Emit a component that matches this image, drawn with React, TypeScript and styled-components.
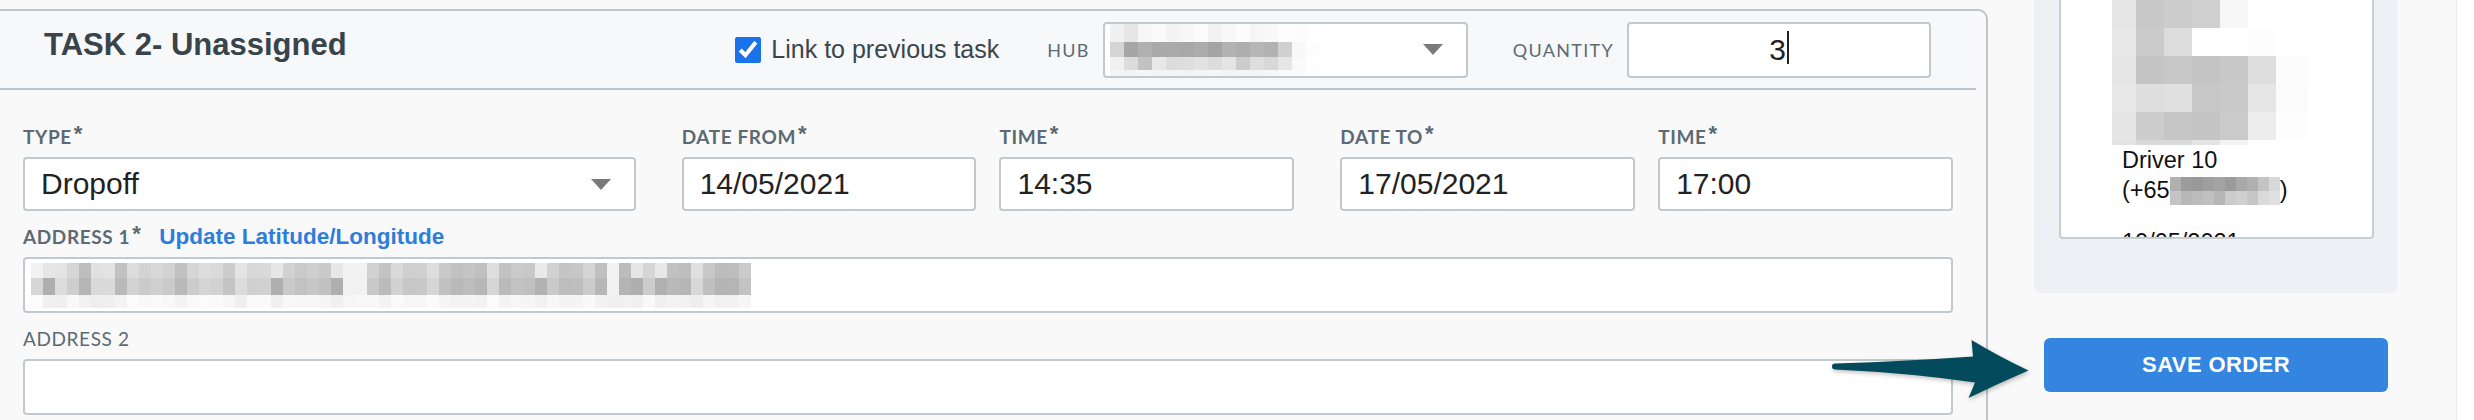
import React from "react";
import styled, { createGlobalStyle } from "styled-components";

const GlobalStyle = createGlobalStyle`
  html, body {
    margin: 0;
    padding: 0;
    background: #ffffff;
  }
  body {
    font-family: "Liberation Sans", Arial, sans-serif;
  }
  * {
    box-sizing: border-box;
  }
`;

const Page = styled.div`
  display: flex;
  width: 2474px;
  height: 420px;
  overflow: hidden;
  background: #ffffff;
`;

const Main = styled.main`
  position: relative;
  flex: 0 0 2457px;
  display: flex;
  align-items: flex-start;
  gap: 46px;
  background: #f9f9f9;
  border-right: 1px solid #ececec;
`;

const TaskPanel = styled.section`
  flex: 0 0 1988px;
  height: 430px;
  margin-top: 9px;
  border-top: 2px solid #bcc5ca;
  border-right: 2px solid #bcc5ca;
  border-top-right-radius: 10px;
  background: #f9f9f9;
`;

const PanelHeader = styled.header`
  display: flex;
  align-items: center;
  height: 79px;
  margin-right: 10px;
  padding: 0 45px 0 44px;
  background: #f6f8f9;
  border-bottom: 2px solid #bcc5ca;
`;

const Title = styled.h2`
  flex: 1;
  margin: 0 0 10px;
  font-size: 31px;
  font-weight: 700;
  color: #38434b;
`;

const CheckLabel = styled.label`
  display: flex;
  align-items: center;
  gap: 10px;
  margin-right: 48px;
  font-size: 25px;
  color: #3b454c;
`;

const CheckBox = styled.input`
  width: 26px;
  height: 26px;
  margin: 0;
  accent-color: #1a73e8;
`;

const HeaderTag = styled.span`
  margin-right: 13px;
  font-family: Lato, "Liberation Sans", sans-serif;
  font-size: 18px;
  letter-spacing: 1.3px;
  text-transform: uppercase;
  color: #5d6b74;
`;

const BoxBase = styled.div<{ $w?: number; $h: number }>`
  position: relative;
  display: flex;
  align-items: center;
  width: ${(p) => (p.$w ? `${p.$w}px` : "100%")};
  height: ${(p) => p.$h}px;
  padding: 0 16px;
  background: #ffffff;
  border: 2px solid #c0c9cd;
  border-radius: 4px;
  font-size: 30px;
  color: #222222;
`;

const SelectBox = styled(BoxBase)`
  justify-content: space-between;
  padding-right: 23px;
`;

const SelectCaret = styled.span`
  width: 0;
  height: 0;
  border-left: 10px solid transparent;
  border-right: 10px solid transparent;
  border-top: 11px solid #7a7a7a;
`;

const HubSelect = styled(SelectBox)`
  margin-right: 45px;
  padding-left: 5px;
`;

const QuantityBox = styled(BoxBase)`
  justify-content: center;
`;

const RedactedBox = styled(BoxBase)`
  padding-left: 6px;
`;

const TypingCaret = styled.span`
  width: 2px;
  height: 33px;
  margin-left: 1px;
  margin-top: -5px;
  background: #222222;
`;

const TextInput = styled.input<{ $h: number }>`
  display: block;
  width: 100%;
  height: ${(p) => p.$h}px;
  padding: 0 16px;
  background: #ffffff;
  border: 2px solid #c0c9cd;
  border-radius: 4px;
  font-family: "Liberation Sans", Arial, sans-serif;
  font-size: 30px;
  color: #222222;
  outline: none;
`;

const PanelBody = styled.div`
  display: flex;
  flex-direction: column;
  gap: 15px;
  padding: 36px 33px 0 23px;
`;

const TopRow = styled.div`
  display: grid;
  grid-template-columns: repeat(3, 1fr);
  gap: 46px;
`;

const Pair = styled.div`
  display: grid;
  grid-template-columns: 1fr 1fr;
  gap: 23px;
`;

const Field = styled.div`
  display: flex;
  flex-direction: column;
  min-width: 0;
`;

const FieldLabel = styled.div<{ $bold?: boolean }>`
  display: flex;
  align-items: baseline;
  height: 22px;
  margin-bottom: 9px;
  line-height: 22px;
  font-family: Lato, "Liberation Sans", sans-serif;
  font-size: 19px;
  font-weight: ${(p) => (p.$bold ? 700 : 400)};
  letter-spacing: 0.6px;
  text-transform: uppercase;
  color: #5b6a73;
  white-space: nowrap;
`;

const Req = styled.sup`
  position: relative;
  top: -3px;
  margin-left: 2px;
  font-family: "Liberation Sans", Arial, sans-serif;
  font-size: 22px;
  font-weight: 700;
  line-height: 0;
`;

const UpdateLink = styled.a`
  margin-left: 18px;
  font-family: "Liberation Sans", Arial, sans-serif;
  font-size: 22.5px;
  font-weight: 700;
  letter-spacing: 0;
  text-transform: none;
  color: #2d7ddb;
  text-decoration: none;
`;

const Sidebar = styled.aside`
  flex: 0 0 363px;
  display: flex;
  flex-direction: column;
`;

const DriverPanel = styled.div`
  padding: 0 23px 54px 25px;
  background: #eef0f5;
  border-radius: 0 0 6px 6px;
`;

const DriverCard = styled.div`
  height: 239px;
  overflow: hidden;
  padding-left: 51px;
  background: #ffffff;
  border: 2px solid #c7ced2;
  border-top: none;
  border-radius: 0 0 4px 4px;
`;

const DriverText = styled.div`
  margin-left: 10px;
  font-size: 23.5px;
  line-height: 30px;
  color: #111111;
`;

const DateLine = styled.div`
  margin-top: 22px;
`;

const SaveButton = styled.button`
  height: 54px;
  margin: 45px 9px 0 10px;
  background: #3385e0;
  border: none;
  border-radius: 6px;
  font-family: "Liberation Sans", Arial, sans-serif;
  font-size: 22px;
  font-weight: 700;
  letter-spacing: 0.4px;
  color: #ffffff;
`;

const Gutter = styled.div`
  flex: 1;
  background: #ffffff;
`;

const Pointer = styled.svg`
  position: absolute;
  left: 1830px;
  top: 335px;
  filter: drop-shadow(1px 2px 2px rgba(0, 0, 0, 0.25));
`;

const MosaicSvg = styled.svg`
  display: block;
  flex-shrink: 0;
`;

const InlineMosaic = styled(MosaicSvg)`
  display: inline-block;
  vertical-align: -7px;
`;

const grey = (v: number) => {
  const h = Math.max(0, Math.min(255, Math.round(v))).toString(16).padStart(2, "0");
  return `#${h}${h}${h}`;
};

// deterministic noise for the redacted areas
const noise = (i: number, seed: number) => ((i * 53 + seed * 29 + ((i * i * 7) % 13) * 11) % 41) / 41;

const makeRow = (count: number, base: number, spread: number, seed: number, light: number[] = []) =>
  Array.from({ length: count }, (_, i) => (light.includes(i) ? 0xf2 : base + noise(i, seed) * spread));

type MosaicProps = {
  cols: number[];
  rows: number[];
  values: number[][];
  as?: typeof MosaicSvg;
};

const Mosaic: React.FC<MosaicProps> = ({ cols, rows, values, as }) => {
  const Svg = as || MosaicSvg;
  const w = cols.reduce((a, b) => a + b, 0);
  const h = rows.reduce((a, b) => a + b, 0);
  let y = 0;
  return (
    <Svg width={w} height={h} viewBox={`0 0 ${w} ${h}`} shapeRendering="crispEdges">
      {rows.map((rh, r) => {
        let x = 0;
        const top = y;
        y += rh;
        return cols.map((cw, c) => {
          const left = x;
          x += cw;
          return <rect key={`${r}-${c}`} x={left} y={top} width={cw} height={rh} fill={grey(values[r][c] ?? 255)} />;
        });
      })}
    </Svg>
  );
};

const photoValues = [
  [0xe6, 0xc8, 0xcd, 0xcf, 0xf7, 0xff, 0xff],
  [0xe8, 0xca, 0xdc, 0xff, 0xff, 0xfd, 0xff],
  [0xe6, 0xc4, 0xc7, 0xc4, 0xc8, 0xde, 0xfc],
  [0xe8, 0xde, 0xe0, 0xc7, 0xc9, 0xe6, 0xfb],
  [0xe5, 0xcd, 0xc6, 0xc5, 0xcb, 0xed, 0xfd],
  [0xe3, 0xd9, 0xda, 0xe4, 0xf3, 0xff, 0xff],
];

const addressCols = Array.from({ length: 60 }, () => 12);
const addressValues = [
  makeRow(60, 0xbc, 0x30, 1, [0, 26, 27, 48]),
  makeRow(60, 0xae, 0x30, 4, [26, 27, 48]),
  makeRow(60, 0xee, 0x0e, 7),
];

const hubCols = Array.from({ length: 15 }, () => 14);
const hubValues = [
  [0xf0, 0xe6, 0xf6, 0xfa, 0xf4, 0xf7, 0xfb, 0xf2, 0xf8, 0xfc, 0xf6, 0xf9, 0xfd, 0xfc, 0xfe],
  [0xd4, 0xa6, 0xb0, 0xa9, 0xaa, 0xa8, 0xac, 0xa4, 0xb3, 0xae, 0xb6, 0xb2, 0xd0, 0xf8, 0xfd],
  [0xf0, 0xdc, 0xc2, 0xe8, 0xdc, 0xde, 0xe2, 0xdc, 0xe4, 0xcc, 0xde, 0xd8, 0xe6, 0xfa, 0xfe],
  [0xf4, 0xf2, 0xf6, 0xf3, 0xf5, 0xf2, 0xf4, 0xf6, 0xf3, 0xf5, 0xf4, 0xf6, 0xfa, 0xfb, 0xfd],
];

const phoneCols = Array.from({ length: 10 }, () => 11);
const phoneValues = [
  [0xb0, 0x9c, 0x98, 0x9e, 0xa4, 0x9a, 0xa8, 0xb0, 0xc4, 0xd8],
  [0xc4, 0xb8, 0xbc, 0xc0, 0xb6, 0xcc, 0xd0, 0xc6, 0xda, 0xe0],
];

const Required = () => <Req>*</Req>;

const App: React.FC = () => {
  return (
    <>
      <GlobalStyle />
      <Page>
        <Main>
          <TaskPanel>
            <PanelHeader>
              <Title>TASK 2- Unassigned</Title>
              <CheckLabel>
                <CheckBox type="checkbox" defaultChecked />
                Link to previous task
              </CheckLabel>
              <HeaderTag>Hub</HeaderTag>
              <HubSelect $w={365} $h={56}>
                <Mosaic cols={hubCols} rows={[18, 15, 13, 6]} values={hubValues} />
                <SelectCaret />
              </HubSelect>
              <HeaderTag>Quantity</HeaderTag>
              <QuantityBox $w={304} $h={56}>
                3
                <TypingCaret />
              </QuantityBox>
            </PanelHeader>

            <PanelBody>
              <TopRow>
                <Field>
                  <FieldLabel $bold>
                    Type
                    <Required />
                  </FieldLabel>
                  <SelectBox $h={54}>
                    Dropoff
                    <SelectCaret />
                  </SelectBox>
                </Field>
                <Pair>
                  <Field>
                    <FieldLabel $bold>
                      Date from
                      <Required />
                    </FieldLabel>
                    <TextInput $h={54} readOnly value="14/05/2021" />
                  </Field>
                  <Field>
                    <FieldLabel $bold>
                      Time
                      <Required />
                    </FieldLabel>
                    <TextInput $h={54} readOnly value="14:35" />
                  </Field>
                </Pair>
                <Pair>
                  <Field>
                    <FieldLabel $bold>
                      Date to
                      <Required />
                    </FieldLabel>
                    <TextInput $h={54} readOnly value="17/05/2021" />
                  </Field>
                  <Field>
                    <FieldLabel $bold>
                      Time
                      <Required />
                    </FieldLabel>
                    <TextInput $h={54} readOnly value="17:00" />
                  </Field>
                </Pair>
              </TopRow>

              <Field>
                <FieldLabel $bold>
                  Address 1
                  <Required />
                  <UpdateLink href="#">Update Latitude/Longitude</UpdateLink>
                </FieldLabel>
                <RedactedBox $h={56}>
                  <Mosaic cols={addressCols} rows={[15, 17, 13]} values={addressValues} />
                </RedactedBox>
              </Field>

              <Field>
                <FieldLabel>Address 2</FieldLabel>
                <TextInput $h={56} readOnly value="" />
              </Field>
            </PanelBody>
          </TaskPanel>

          <Sidebar>
            <DriverPanel>
              <DriverCard>
                <Mosaic cols={[24, 28, 28, 28, 28, 28, 32]} rows={[28, 28, 28, 28, 28, 5]} values={photoValues} />
                <DriverText>
                  Driver 10
                  <br />
                  (+65
                  <Mosaic as={InlineMosaic} cols={phoneCols} rows={[14, 14]} values={phoneValues} />)
                  <DateLine>10/05/2021</DateLine>
                </DriverText>
              </DriverCard>
            </DriverPanel>
            <SaveButton type="button">SAVE ORDER</SaveButton>
          </Sidebar>

          <Pointer width="205" height="70" viewBox="0 0 205 70">
            <path
              d="M 5 28.5 Q 80 26 143 21.5 L 141.5 5 Q 168 21 198.5 35.5 Q 167 49 138.5 63 L 145 47.5 Q 80 38 5 34.5 A 3 3 0 0 1 5 28.5 Z"
              fill="#034b5c"
            />
          </Pointer>
        </Main>
        <Gutter />
      </Page>
    </>
  );
};

export default App;
